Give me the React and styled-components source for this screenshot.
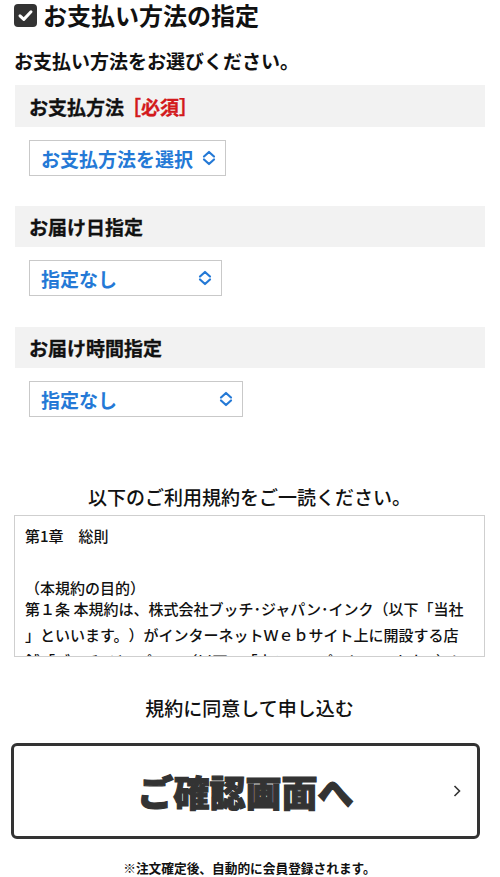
import React from 'react'
import styled, { createGlobalStyle } from 'styled-components'

const GlobalStyle = createGlobalStyle`
  body {
    margin: 0;
    background: #fff;
    color: #111;
    font-family: "Noto Sans CJK JP", "Noto Sans", sans-serif;
    text-spacing-trim: space-all;
  }
`
const Page = styled.div`
  width: 500px;
  padding: 0 15px 0 14px;
  box-sizing: border-box;
`
const Title = styled.h2`
  display: flex;
  align-items: center;
  gap: 6px;
  margin: 0;
  height: 30px;
  font-size: 24px;
  font-weight: 700;
  line-height: 30px;
  color: #111;
`
const Lead = styled.p`
  margin: 17px 0 0 0;
  font-size: 19px;
  font-weight: 700;
  line-height: 28px;
  color: #111;
`
const Section = styled.div`
  margin-top: ${(p) => p.top}px;
`
const Bar = styled.div`
  display: flex;
  align-items: center;
  height: ${(p) => p.h || 42}px;
  margin-left: 1px;
  padding-left: 14px;
  background: #f2f2f2;
  font-size: 19px;
  font-weight: 700;
  color: #111;
  -webkit-text-stroke: 0.3px #111;
`
const Required = styled.span`
  color: #d3191c;
  margin-left: -2px;
  -webkit-text-stroke: 0.3px #d3191c;
`
const Select = styled.div`
  display: flex;
  align-items: center;
  justify-content: space-between;
  box-sizing: border-box;
  width: ${(p) => p.w}px;
  height: 36px;
  margin: 13px 0 0 15px;
  padding: 0 9px 0 11px;
  border: 1px solid #c9c9c9;
  background: #fff;
  color: #2479d6;
  font-size: 19px;
  font-weight: 700;
`
const TermsHead = styled.p`
  margin: 67px 0 0 0;
  text-align: center;
  font-size: 19px;
  font-weight: 500;
  line-height: 26px;
  color: #111;
`
const TermsBox = styled.div`
  box-sizing: border-box;
  height: 142px;
  margin-top: 5px;
  padding: 9px 10px 0 10px;
  border: 1px solid #cfcfcf;
  overflow: hidden;
  font-size: 15px;
  font-weight: 500;
  color: #111;
  line-break: anywhere;
`
const Chapter = styled.div`
  line-height: 22px;
`
const Heading = styled.div`
  margin-top: 32px;
  line-height: 18px;
`
const Article = styled.div`
  line-height: 26px;
  margin-top: -1px;
`
const Agree = styled.p`
  margin: 38px 0 0 0;
  text-align: center;
  font-size: 19px;
  font-weight: 500;
  line-height: 26px;
  color: #111;
`
const NextButton = styled.button`
  position: relative;
  display: flex;
  align-items: center;
  justify-content: center;
  box-sizing: border-box;
  width: 469px;
  height: 96px;
  margin: 22px 0 0 -3px;
  border: 3px solid #333;
  border-radius: 6px;
  background: #fff;
  color: #333;
  font-family: "Noto Sans CJK JP", sans-serif;
  font-size: 36px;
  font-weight: 900;
  -webkit-text-stroke: 1.2px #333;
  cursor: pointer;
  svg {
    position: absolute;
    right: 16px;
    top: 50%;
    margin-top: -6px;
  }
`
const Note = styled.p`
  margin: 20px 0 0 0;
  text-align: center;
  font-size: 12.7px;
  font-weight: 700;
  line-height: 18px;
  color: #111;
`

const CheckIcon = () => (
  <svg width='23' height='23' viewBox='0 0 23 23'>
    <rect x='0' y='0' width='23' height='23' rx='4' fill='#333' />
    <path d='M6 11.8 L9.8 15.4 L17 7.8' stroke='#fff' strokeWidth='3' fill='none' strokeLinecap='round' strokeLinejoin='round' />
  </svg>
)

const UpDown = () => (
  <svg width='14' height='16' viewBox='0 0 14 16'>
    <path d='M2 6.5 L7 2 L12 6.5 M2 9.5 L7 14 L12 9.5' stroke='#2479d6' strokeWidth='2.2' fill='none' strokeLinecap='round' strokeLinejoin='round' />
  </svg>
)

const Arrow = () => (
  <svg width='8' height='12' viewBox='0 0 8 12'>
    <path d='M1.5 1 L6.5 6 L1.5 11' stroke='#333' strokeWidth='1.6' fill='none' />
  </svg>
)

const App = () => (
  <Page>
    <GlobalStyle />
    <Title>
      <CheckIcon />
      お支払い方法の指定
    </Title>
    <Lead>お支払い方法をお選びください。</Lead>

    <Section top={10}>
      <Bar>
        お支払方法<Required>［必須］</Required>
      </Bar>
      <Select w={197}>
        お支払方法を選択
        <UpDown />
      </Select>
    </Section>

    <Section top={30}>
      <Bar h={41}>お届け日指定</Bar>
      <Select w={193}>
        指定なし
        <UpDown />
      </Select>
    </Section>

    <Section top={31}>
      <Bar h={41}>お届け時間指定</Bar>
      <Select w={214}>
        指定なし
        <UpDown />
      </Select>
    </Section>

    <TermsHead>以下のご利用規約をご一読ください。</TermsHead>
    <TermsBox>
      <Chapter>第1章　総則</Chapter>
      <Heading>（本規約の目的）</Heading>
      <Article>
        第１条 本規約は、株式会社ブッチ･ジャパン･インク（以下「当社<br />
        」といいます。）がインターネットＷｅｂサイト上に開設する店<br />
        舗「ブッチ･ジャパン」（以下、「本ショップ」といいます。）において、当社が提供するサービスの利用条件を定めるものです。
      </Article>
    </TermsBox>

    <Agree>規約に同意して申し込む</Agree>
    <NextButton>
      ご確認画面へ
      <Arrow />
    </NextButton>
    <Note>※注文確定後、自動的に会員登録されます。</Note>
  </Page>
)

export default App
